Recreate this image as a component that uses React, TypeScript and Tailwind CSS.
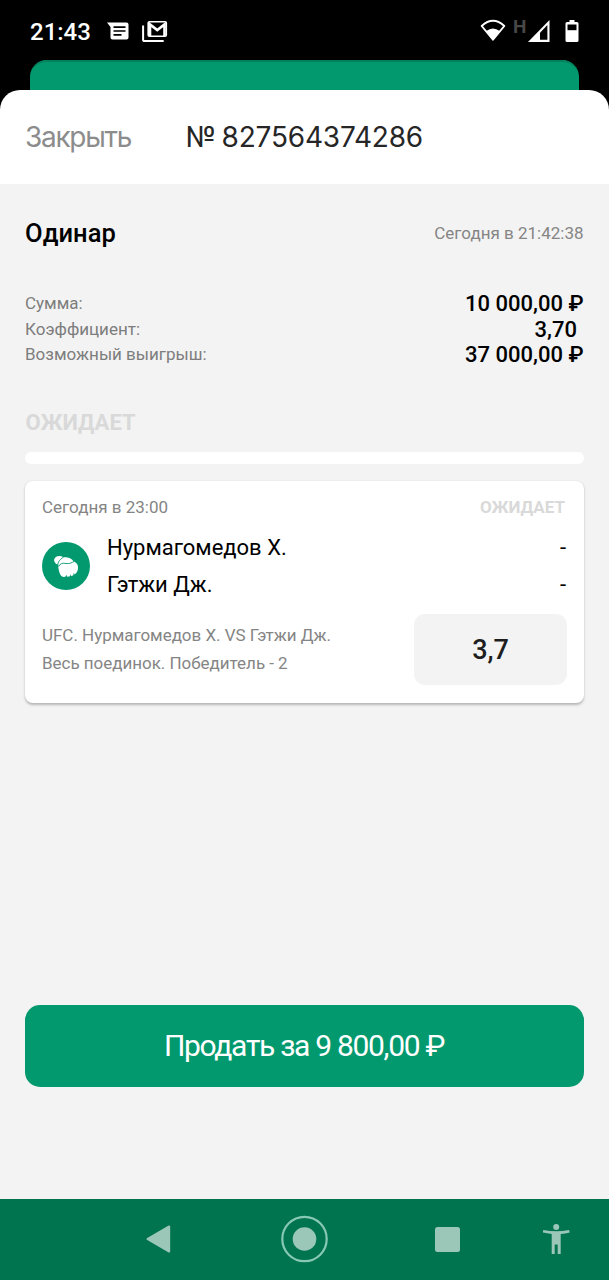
function StatusBar() {
  return (
    <div className="flex h-[60px] items-start bg-black pl-[30px] font-['Roboto',sans-serif] text-white">
      <span className="mt-[17px] w-[77px] text-[24px] leading-[30px] font-medium">21:43</span>
      <svg className="mt-[22px]" width="22" height="18" viewBox="0 0 22 18" fill="none">
        <path d="M0 .5h19.5Q21.500 .5 21.500 2.500v13q0 2-2 2h-14q-2 0-2-2V5Z" fill="#fff" />
        <path d="M6.500 5.200h12M6.500 9h12M6.500 12.800h8" stroke="#000" strokeWidth="1.700" />
      </svg>
      <svg className="mt-[20px] ml-[13px]" width="27" height="23" viewBox="0 0 27 23" fill="none">
        <path d="M1.100 5.500v14q0 1.600 1.600 1.600h19" stroke="#fff" strokeWidth="2" />
        <path
          d="M7.500 1.700h15.500q1.300 0 1.300 1.300v12q0 1.300-1.300 1.300H7.500q-1.300 0-1.300-1.300v-12q0-1.300 1.300-1.300Z"
          stroke="#fff"
          strokeWidth="1.600"
        />
        <path d="M8 16V4.500l7.250 5.600 7.250-5.600V16" stroke="#fff" strokeWidth="2.600" />
      </svg>
      <svg className="mt-[19px] ml-[311px]" width="26" height="23" viewBox="0 0 26 23" fill="none">
        <path d="M1.700 7Q13-3.300 24.300 7L13 20.700Z" stroke="#fff" strokeWidth="1.900" strokeLinejoin="round" />
        <path d="M6.300 12Q13 6.800 19.700 12L13 21Z" fill="#fff" />
      </svg>
      <span className="mt-[17px] ml-[7px] w-[15px] text-[19px] leading-[20px] font-bold text-[#474747]">H</span>
      <svg className="mt-[20px]" width="22" height="22" viewBox="0 0 22 22" fill="none">
        <path d="M0 22 21.500 0v22Z" fill="#fff" />
        <path d="M12 12.800 19.400 5v14.800H12Z" fill="#000" />
      </svg>
      <svg className="mt-[20px] ml-[15px]" width="15" height="22" viewBox="0 0 15 22">
        <path d="M4.500 0h5v2H12q1.500 0 1.500 1.500v17Q13.500 22 12 22H2Q.5 22 .5 20.500v-17Q.5 2 2 2h2.500Z" fill="#fff" />
        <path d="M2.500 4.500h9v5.700h-9Z" fill="#000" />
      </svg>
    </div>
  );
}

function SheetHeader() {
  return (
    <div className="bg-black">
      <div className="mx-[30px] h-[30px] rounded-t-[17px] bg-[#02996e] shadow-[inset_0_3px_0_-1px_#03815d]" />
      <header className="flex h-[94px] items-center rounded-t-[20px] bg-white px-[25px] font-['Inter',sans-serif]">
        <button className="w-[160.500px] text-left text-[28px] font-normal tracking-[-1.300px] text-[#8c8c8c]">Закрыть</button>
        <h1 className="text-[28px] font-normal tracking-[-0.200px] whitespace-nowrap text-[#262626] [word-spacing:-2px]">
          № 827564374286
        </h1>
      </header>
    </div>
  );
}

const totals = [
  { label: 'Сумма:', value: '10 000,00 ₽', inset: false },
  { label: 'Коэффициент:', value: '3,70', inset: true },
  { label: 'Возможный выигрыш:', value: '37 000,00 ₽', inset: false },
];

function Summary() {
  return (
    <section>
      <div className="flex h-[30px] items-center justify-between">
        <h2 className="text-[25.500px] font-medium tracking-[0.100px] text-black">Одинар</h2>
        <span className="pt-px pr-[0.500px] text-[17px] text-[#858585]">Сегодня в 21:42:38</span>
      </div>
      <dl className="mt-[43px]">
        {totals.map((row) => (
          <div key={row.label} className="flex h-[25.5px] items-center justify-between">
            <dt className="text-[17px] text-[#7d7d7d]">{row.label}</dt>
            <dd
              className={
                row.inset
                  ? 'pr-[7px] text-[22px] font-medium text-black'
                  : 'pr-[0.500px] text-[22px] font-medium text-black'
              }
            >
              {row.value}
            </dd>
          </div>
        ))}
      </dl>
      <p className="mt-[40px] pl-[0.500px] text-[22px] leading-[30px] font-bold text-[#d9d9d9]">ОЖИДАЕТ</p>
      <div className="mt-[14px] h-[12px] rounded-full bg-white" />
    </section>
  );
}

function GloveIcon() {
  return (
    <svg width="48" height="48" viewBox="0 0 48 48" fill="none">
      <circle cx="24" cy="24" r="24" fill="#02996e" />
      <path
        d="M16.200 22.800C12.800 21.600 11.200 18.600 12.700 16.200C14.500 13.600 18.500 13.500 21.500 15.300C25 14.700 29.500 15.600 31.500 19.200C34.500 20.500 36.500 23 36 26.500C35.800 29.500 34.200 31.500 32.500 32.500L31.700 30.800L31.300 33.300Q30.200 34 28.900 34L28.300 32L27.900 34.300Q26.300 34.800 25 34.600L24.400 32.800L23.400 34.800C20.500 35.500 18.500 33.800 17.800 31.500C17 29 16.200 26.300 16.200 22.800Z"
        fill="#fff"
      />
      <path
        d="M15.800 24.500C15.500 21 16.500 18.300 21.300 15.300M17 24C17.600 21.800 20.500 20.700 24 21.500C27.300 22 29.500 20.900 32 19.500"
        stroke="#02996e"
        strokeWidth=".9"
        strokeLinecap="round"
      />
    </svg>
  );
}

function BetCard() {
  return (
    <article className="mt-[17px] h-[222px] rounded-[8px] bg-white px-[17px] pt-[15px] shadow-[0_1.5px_2.5px_rgba(0,0,0,0.25)]">
      <div className="flex h-[24px] items-center justify-between text-[17px]">
        <span className="text-[#858585]">Сегодня в 23:00</span>
        <span className="pr-[2px] font-bold text-[#d9d9d9]">ОЖИДАЕТ</span>
      </div>
      <div className="mt-[9px] flex items-center">
        <GloveIcon />
        <div className="ml-[17px] grow text-[22px] text-black">
          <div className="flex h-[37px] items-center justify-between">
            <span>Нурмагомедов Х.</span>
            <span className="pr-[1px]">-</span>
          </div>
          <div className="flex h-[37px] items-center justify-between">
            <span>Гэтжи Дж.</span>
            <span className="pr-[1px]">-</span>
          </div>
        </div>
      </div>
      <div className="mt-[11px] flex justify-between">
        <p className="pt-[7px] text-[17px] leading-[28.500px] tracking-[-0.030px] whitespace-nowrap text-[#858585]">
          UFC. Нурмагомедов Х. VS Гэтжи Дж.
          <br />
          Весь поединок. Победитель - 2
        </p>
        <div className="flex h-[71px] w-[153px] items-center justify-center rounded-[11px] bg-[#f3f3f3] pt-[2px] text-[27px] font-medium text-[#1e1e20]">
          3,7
        </div>
      </div>
    </article>
  );
}

function NavBar() {
  return (
    <nav className="flex h-[81px] items-center bg-[#00734f] pb-px pl-[146px]">
      <svg width="26" height="28" viewBox="0 0 26 28">
        <path d="M1.200 12.900 22.200.7Q24.200-.2 24.200 1.700v24.600q0 1.900-2 1L1.200 15.100Q-.3 14 1.200 12.900Z" fill="#9bc7b9" />
      </svg>
      <svg className="ml-[109px]" width="48" height="48" viewBox="0 0 48 48" fill="none">
        <circle cx="23.500" cy="24" r="22.200" stroke="#88c9b3" strokeWidth="2.200" />
        <circle cx="23.500" cy="24" r="11.800" fill="#9bc7b9" />
      </svg>
      <div className="ml-[106px] h-[25px] w-[25px] rounded-[2.500px] bg-[#9bc7b9]" />
      <svg className="ml-[83px]" width="27" height="30" viewBox="0 0 27 30" fill="#9bc7b9">
        <circle cx="13.200" cy="3" r="3" />
        <path d="M.3 5.900q12.900 2.900 25.800 0l.6 2.600q-4.400 1-9 1.500V30h-3v-9.500h-3V30h-3V10q-4.600-.5-9-1.500Z" />
      </svg>
    </nav>
  );
}

export default function App() {
  return (
    <div className="flex h-[1280px] w-[609px] flex-col overflow-hidden bg-[#f3f3f3] font-['Roboto',sans-serif]">
      <StatusBar />
      <SheetHeader />
      <main className="flex grow flex-col px-[25px] pt-[34px]">
        <Summary />
        <BetCard />
        <button className="mt-auto mb-[112px] h-[82px] shrink-0 rounded-[15px] bg-[#02996e] pr-px pb-px text-[30px] tracking-[-1.300px] text-white">
          Продать за 9 800,00 ₽
        </button>
      </main>
      <NavBar />
    </div>
  );
}
